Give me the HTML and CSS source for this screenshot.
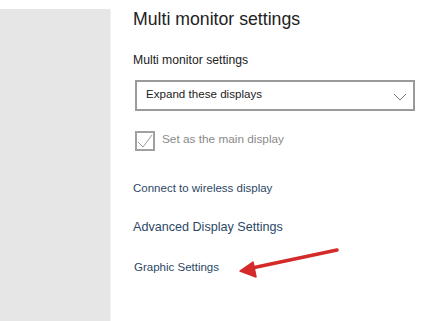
FILE: index.html
```html
<!DOCTYPE html>
<html>
<head>
<meta charset="utf-8">
<link rel="stylesheet" href="styles.css">
</head>
<body>
<div class="page">
  <aside class="sidebar"></aside>
  <main class="content">
    <h1 class="title">Multi monitor settings</h1>
    <div class="label">Multi monitor settings</div>
    <div class="select">
      <span class="select-text">Expand these displays</span>
      <svg class="chevron" width="14" height="8" viewBox="0 0 14 8"><path d="M1 1 L7 7 L13 1" fill="none" stroke="#777" stroke-width="1"/></svg>
    </div>
    <div class="check-row">
      <span class="checkbox"><svg width="16" height="16" viewBox="0 0 16 16"><path d="M1 9 L6 14 L15 2" fill="none" stroke="#999" stroke-width="1"/></svg></span>
      <span class="check-label">Set as the main display</span>
    </div>
    <a class="link small connect">Connect to wireless display</a>
    <a class="link large advanced">Advanced Display Settings</a>
    <a class="link small graphic">Graphic Settings</a>
  </main>
  <svg class="arrow" width="439" height="321" viewBox="0 0 439 321">
    <path d="M337 250 L252 268" stroke="#d42a2a" stroke-width="3.5" stroke-linecap="round" fill="none"/>
    <path d="M240 271 L253 262 L256 277 Z" fill="#d42a2a" stroke="#d42a2a" stroke-width="1.5" stroke-linejoin="round"/>
  </svg>
</div>
</body>
</html>
```
FILE: styles.css
```css
html, body {
  margin: 0;
  padding: 0;
  background: #fff;
}
body {
  font-family: "Liberation Sans", Arial, sans-serif;
  width: 439px;
  height: 321px;
  overflow: hidden;
}
.page {
  position: relative;
  display: flex;
  height: 321px;
}
.sidebar {
  width: 110px;
  margin-top: 9px;
  background: #e6e6e6;
  border-right: 1px solid #f2f2f2;
  flex: none;
}
.content {
  padding-left: 22px;
  display: flex;
  flex-direction: column;
  align-items: flex-start;
}
.title {
  margin: 9px 0 0 0;
  font-size: 17.7px;
  font-weight: normal;
  color: #222;
  line-height: 20px;
}
.label {
  margin-top: 24px;
  font-size: 12.2px;
  line-height: 14px;
  color: #222;
}
.select {
  margin-top: 13px;
  margin-left: 2px;
  border: 2px solid #9a9a9a;
  display: flex;
  align-items: center;
  justify-content: space-between;
  padding: 0 6px 0 9px;
  box-sizing: border-box;
  width: 280px;
  height: 31px;
}
.select-text {
  font-size: 11.6px;
  color: #222;
  margin-top: -4px;
}
.chevron {
  margin-top: 3px;
}
.check-row {
  margin-top: 20px;
  margin-left: 2px;
  display: flex;
  align-items: flex-start;
}
.checkbox {
  width: 16px;
  height: 16px;
  border: 2px solid #a0a0a0;
  display: block;
}
.checkbox svg { display: block; }
.check-label {
  margin-left: 7px;
  font-size: 11.8px;
  color: #8a8a8a;
  line-height: 14px;
  margin-top: 1px;
}
.link {
  color: #2b4866;
  display: block;
}
.small {
  font-size: 11.5px;
  line-height: 14px;
}
.large {
  font-size: 12.6px;
  line-height: 17px;
}
.connect { margin-top: 30px; }
.advanced { margin-top: 24px; }
.graphic { margin-top: 24px; margin-left: 1px; }
.arrow {
  position: absolute;
  left: 0;
  top: 0;
  pointer-events: none;
}
```
